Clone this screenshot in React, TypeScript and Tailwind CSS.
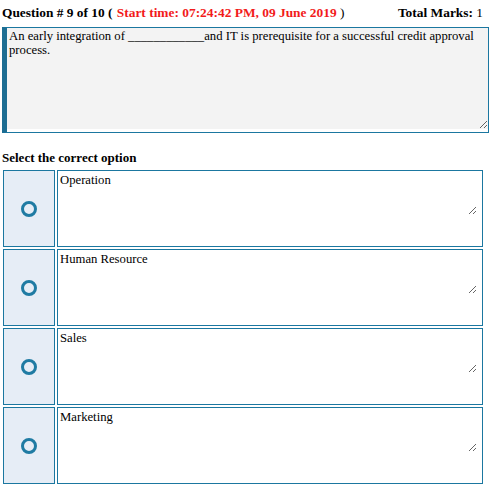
import React from 'react'

const options = ['Operation', 'Human Resource', 'Sales', 'Marketing']

function OptionRow({ label }: { label: string }) {
  return (
    <div className="flex gap-[2px] h-[77px]">
      <div className="w-[52px] shrink-0 border border-[#1b77a0] bg-[#e6edf6] flex items-center justify-center">
        <span className="block w-[16px] h-[16px] rounded-full border-[3px] border-[#1f7ba3] bg-transparent" />
      </div>
      <div className="w-[426px] border border-[#1b77a0] bg-white">
        <textarea
          readOnly
          defaultValue={label}
          className="block w-[419px] h-[44px] px-[2px] pt-[2px] bg-white text-[12.7px] leading-[15px] text-black outline-none font-['Liberation_Serif',serif]"
        />
      </div>
    </div>
  )
}

export default function App() {
  return (
    <div className="w-[493px] h-[488px] bg-white text-black text-[13px] font-['Liberation_Serif',serif]">
      <div className="h-[27px] flex items-center justify-between pl-[2px] pr-[10px] text-[13.4px]">
        <div>
          <span className="font-bold">Question # 9 of 10 ( </span>
          <span className="ml-[1px] font-bold text-[#f21b1b]">Start time: 07:24:42 PM, 09 June 2019</span>
          <span> )</span>
        </div>
        <div>
          <span className="font-bold">Total Marks: </span>
          <span>1</span>
        </div>
      </div>

      <div className="ml-[2px] w-[487px] h-[106px] border border-[#1b77a0] border-l-[5px] border-l-[#1d6d92] bg-white pb-[3px]">
        <textarea
          readOnly
          defaultValue="An early integration of ____________and IT is prerequisite for a successful credit approval process."
          className="block w-full h-full px-[2px] pt-[1px] bg-[#f3f3f3] text-[12.7px] leading-[14px] text-black outline-none font-['Liberation_Serif',serif]"
        />
      </div>

      <div className="pl-[2px] pt-[17px] pb-[5px] font-bold leading-[15px]">Select the correct option</div>

      <div className="flex flex-col gap-[2px] pl-[3px]">
        {options.map((o) => (
          <OptionRow key={o} label={o} />
        ))}
      </div>
    </div>
  )
}
